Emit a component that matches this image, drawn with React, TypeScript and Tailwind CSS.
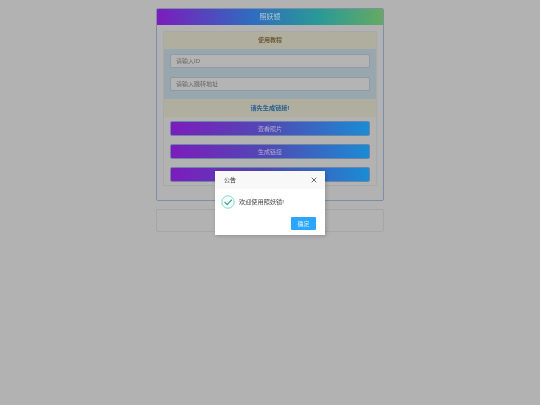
import { X } from 'lucide-react';

const font = { fontFamily: '"Liberation Sans", "Noto Sans CJK SC", sans-serif' };

function GradButton({ label }: { label: string }) {
  return (
    <button className="h-[15px] w-full rounded-[2px] border border-[#6b86a6] bg-[linear-gradient(to_right,#7c1cbc,#4f4bb4_50%,#1a8cd4)] text-[6px] leading-none text-[#b4aed0]">
      {label}
    </button>
  );
}

function Field({ placeholder }: { placeholder: string }) {
  return (
    <div className="flex h-[14px] items-center rounded-[2px] border border-[#8f9aa2] bg-[#b4b4b4] pl-[5px] text-[6px] text-[#666]">
      {placeholder}
    </div>
  );
}

export default function App() {
  return (
    <div className="relative h-[405px] w-[540px] overflow-hidden bg-[#b2b2b2] blur-[0.3px]" style={font}>
      <div className="mx-auto flex w-[228px] flex-col gap-[8px] pt-[8px]">
        <div className="h-[193px] rounded-[2px] border border-[#7e8ea6]">
          <div className="flex h-[16px] items-center justify-center rounded-t-[1px] bg-[linear-gradient(to_right,#7c1cbc,#2f6cc0_42%,#2a9a96_72%,#66aa62)] text-[7px] text-[#b5c6d2]">
            照妖镜
          </div>
          <div className="mx-[6px] mt-[6px] h-[155px] rounded-[2px] border border-[#a8a8a8]">
            <div className="flex h-[17px] items-center justify-center bg-[#b0ae9f] text-[6px] font-bold text-[#6b5a38]">
              使用教程
            </div>
            <div className="flex h-[50px] flex-col gap-[9px] bg-[#98a6ad] px-[6px] pt-[5px]">
              <Field placeholder="请输入ID" />
              <Field placeholder="请输入跳转地址" />
            </div>
            <div className="flex h-[18px] items-center justify-center bg-[#b0ae9f] text-[6.2px] font-bold text-[#285f92]">
              请先生成链接!
            </div>
            <div className="flex flex-col gap-[8px] px-[6px] pt-[4px]">
              <GradButton label="查看照片" />
              <GradButton label="生成链接" />
              <GradButton label="复制链接" />
            </div>
          </div>
        </div>
        <div className="h-[23px] rounded-[2px] border border-[#a6a6a6]" />
      </div>

      {/* notice dialog */}
      <div className="absolute left-[215px] top-[171px] h-[64px] w-[110px] bg-white shadow-[1px_1px_4px_rgba(0,0,0,0.2)]">
        <div className="flex h-[18px] items-center justify-between bg-[#f8f8f8] pl-[9px] pr-[7px] text-[6px] text-[#333]">
          <span>公告</span>
          <X className="h-[8px] w-[8px] text-[#444]" strokeWidth={2.4} />
        </div>
        <div className="flex items-center gap-[4px] pl-[6px] pt-[6px] text-[6.2px] text-[#444]">
          <svg viewBox="0 0 14 14" className="h-[14px] w-[14px]" fill="none">
            <circle cx="7" cy="7" r="6.2" stroke="#7dd6cc" strokeWidth="1" />
            <path d="M3.6 7 L6.2 9.6 L10.8 4.6" stroke="#2aa89a" strokeWidth="1.2" />
          </svg>
          <span>欢迎使用照妖镜!</span>
        </div>
        <div className="flex justify-end pr-[9px] pt-[8px]">
          <button className="h-[13px] w-[25px] rounded-[1px] bg-[#2ba6ff] text-[6px] leading-none text-[#d6eeff]">确定</button>
        </div>
      </div>
    </div>
  );
}
